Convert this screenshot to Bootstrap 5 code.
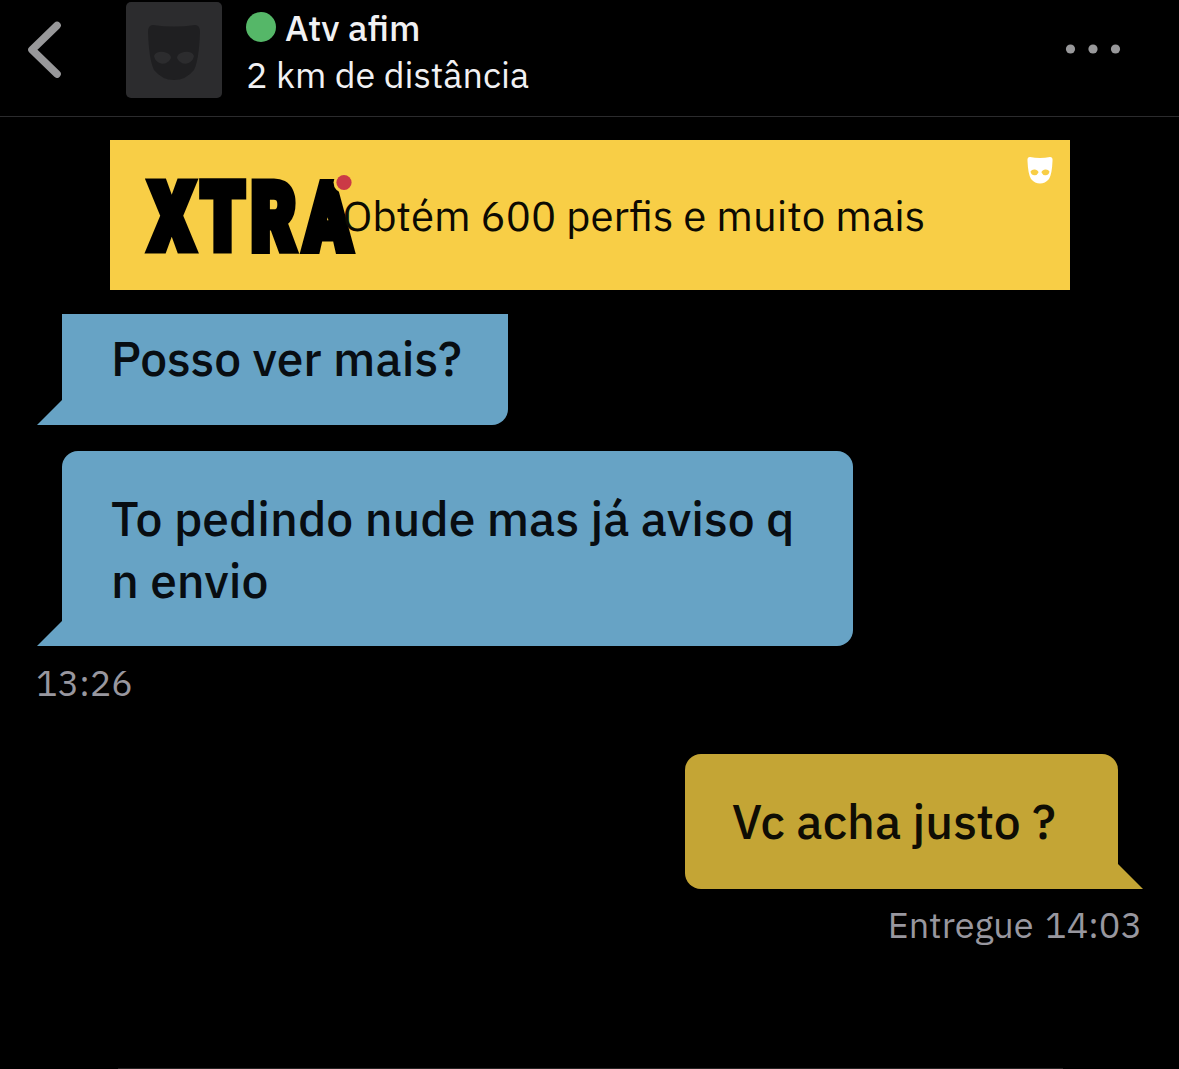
<!DOCTYPE html>
<html lang="pt">
<head>
<meta charset="utf-8">
<meta name="viewport" content="width=device-width, initial-scale=1">
<title>Atv afim</title>
<link href="https://cdn.jsdelivr.net/npm/bootstrap@5.3.0/dist/css/bootstrap.min.css" rel="stylesheet">
<style>
body{background:#000;font-family:"IBM Plex Sans","Noto Sans","Open Sans",sans-serif;color:#f1f1f3;height:1069px;overflow:hidden}
.chat-page{height:1069px}
.topbar{height:117px;border-bottom:1px solid #2b2b2d;padding-left:27px;padding-right:58px}
.back-btn{width:36px;height:58px;margin-top:20px;margin-right:63px}
.avatar-box{width:96px;height:96px;margin-top:2px;margin-right:24px;background:#2c2c2e;border-radius:5px}
.peer-info{padding-top:4px}
.peer-name{font-size:35.700px;line-height:48px;font-weight:500;gap:9px}
.status-dot{width:30px;height:30px;background:#55b768;margin-top:-2px}
.peer-dist{font-size:35.900px;line-height:46px}
.more-btn{margin-top:43px;width:56px;height:12px}
.promo{width:960px;height:150px;margin:23px 0 24px 110px;background:#f8ce46;color:#0c0a02}
.promo-logo{width:215px;height:90px;margin:35px 0 0 32px;overflow:visible}
.promo-text{font-size:42px;line-height:56px;margin:48px 0 0 -14.500px}
.promo-mask{width:26px;height:28px;margin:16px 17px 0 auto}
.bubble{position:relative;color:#080d12;font-size:48px;line-height:62px;font-weight:500;border-radius:16px}
.bubble::after{content:"";position:absolute;bottom:0;width:26px;height:26px}
.bubble-in{background:#67a3c5;margin-left:62px;border-bottom-left-radius:0;padding-left:49px}
.bubble-in::after{left:-25px;background:inherit;clip-path:polygon(100% 0,100% 100%,0 100%)}
.bubble-out{color:#0f0d04;background:#c4a535;border-bottom-right-radius:0;padding-left:47px;margin-right:61px;width:433px;height:135px;padding-top:36px}
.bubble-out::after{right:-25px;background:inherit;clip-path:polygon(0 0,100% 100%,0 100%)}
.cut-top{width:446px;height:111px;padding-top:13px;border-top-left-radius:0;border-top-right-radius:0;margin-bottom:26px}
.tall-msg{width:791px;height:195px;padding-top:36px}
.stamp{font-size:36px;line-height:48px;color:#98979f}
.stamp-in{margin:13px 0 47px 36px}
.stamp-out{margin:12px 37px 0 0;word-spacing:3px}
.composer-edge{height:1px;width:945px;background:#262424;margin-left:118px}
</style>
</head>
<body>
<main class="chat-page d-flex flex-column">
<header class="topbar d-flex align-items-start flex-shrink-0">
<svg class="back-btn" viewBox="0 0 36 58"><path d="M30 5.500 5 29.800 30 54" fill="none" stroke="#98989a" stroke-width="7.600" stroke-linecap="round" stroke-linejoin="round"/></svg>
<div class="avatar-box d-flex"><svg width="96" height="96" viewBox="0 0 96 96"><path fill="#1f1f21" d="M27 23Q48 26 69 23Q74 23 74 30Q73 58 68 68Q60 78 48 78Q36 78 28 68Q23 58 22 30Q22 23 27 23Z"/><path fill="#2c2c2e" d="M28 54Q30 49 38 50Q45 51.500 45 56Q42 62 36 61.800Q29 60 28 54ZM68 54Q66 49 58 50Q51 51.500 51 56Q54 62 60 61.800Q67 60 68 54Z"/></svg></div>
<div class="peer-info"><div class="peer-name d-flex align-items-center"><span class="status-dot rounded-circle"></span><span>Atv afim</span></div><div class="peer-dist">2 km de distância</div></div>
<svg class="more-btn ms-auto" viewBox="0 0 56 12" fill="#98989a"><circle cx="5.500" cy="6" r="4.600"/><circle cx="28" cy="6" r="4.600"/><circle cx="50.500" cy="6" r="4.600"/></svg>
</header>
<section class="promo d-flex align-items-start flex-shrink-0">
<svg class="promo-logo flex-shrink-0" viewBox="0 0 215 90"><text transform="scale(.74 1)" x="10.900 80 147.500 219.600" y="73.800" font-family="Roboto, Inter, sans-serif" font-weight="900" font-size="92" fill="#000" stroke="#000" stroke-width="9">XTRA</text><circle cx="202" cy="7.500" r="10.500" fill="#f8ce46"/><circle cx="202" cy="7.500" r="7.600" fill="#cb3a46"/></svg>
<div class="promo-text text-nowrap">Obtém 600 perfis e muito mais</div>
<svg class="promo-mask" viewBox="0 0 26 28"><path fill="#fff" d="M3 1Q13 3 23 1Q26 1 25.500 5Q25 18 22 23Q18 27.500 13 27.500Q8 27.500 4 23Q1 18 .5 5Q0 1 3 1Z"/><path fill="#f8ce46" d="M3.500 15.500Q5 13 8 13.500Q11.500 14.500 11.500 16.500Q10 19.500 7.500 19.300Q4 19 3.500 15.500ZM22.500 15.500Q21 13 18 13.500Q14.500 14.500 14.500 16.500Q16 19.500 18.500 19.300Q22 19 22.500 15.500Z"/></svg>
</section>
<div class="bubble bubble-in cut-top">Posso ver mais?</div>
<div class="bubble bubble-in tall-msg">To pedindo nude mas já aviso q<br>n envio</div>
<div class="stamp stamp-in">13:26</div>
<div class="bubble bubble-out align-self-end">Vc acha justo ?</div>
<div class="stamp stamp-out align-self-end">Entregue 14:03</div>
<div class="composer-edge mt-auto"></div>
</main>
<script src="https://cdn.jsdelivr.net/npm/bootstrap@5.3.0/dist/js/bootstrap.bundle.min.js"></script>
</body>
</html>
